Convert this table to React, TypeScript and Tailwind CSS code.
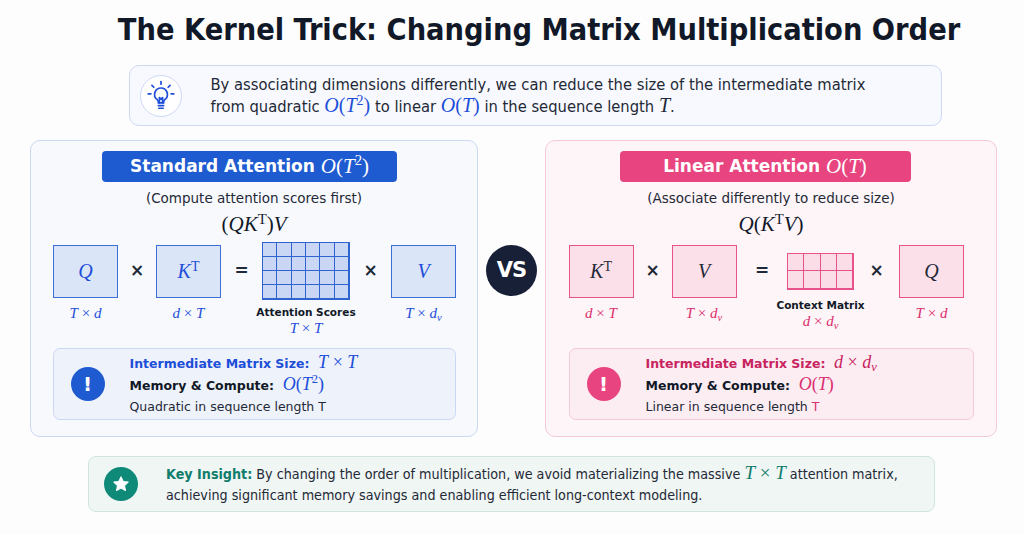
import React from 'react';

const sans = { fontFamily: '"DejaVu Sans", "Noto Sans", sans-serif' };
const cond = { fontFamily: '"DejaVu Sans Condensed", "DejaVu Sans", sans-serif', fontStretch: 'condensed' as const };
const serif = { fontFamily: '"Liberation Serif", "DejaVu Serif", serif' };

function I({ children }: { children: React.ReactNode }) {
  return <span className="italic">{children}</span>;
}

function Sup({ children }: { children: React.ReactNode }) {
  return <sup className="text-[0.7em] not-italic">{children}</sup>;
}

function Sub({ children }: { children: React.ReactNode }) {
  return <sub className="text-[0.7em] italic">{children}</sub>;
}

function Math({ children, className = '' }: { children: React.ReactNode; className?: string }) {
  return (
    <span style={serif} className={`whitespace-nowrap ${className}`}>
      {children}
    </span>
  );
}

function Bulb() {
  return (
    <svg width="28" height="32" viewBox="0 0 26 30" fill="none" stroke="#1d4ed8" strokeWidth="1.6" strokeLinecap="round" strokeLinejoin="round">
      <line x1="13" y1="1.5" x2="13" y2="4" />
      <line x1="4.5" y1="5" x2="6.3" y2="6.8" />
      <line x1="21.5" y1="5" x2="19.7" y2="6.8" />
      <line x1="1" y1="13" x2="3.5" y2="13" />
      <line x1="22.5" y1="13" x2="25" y2="13" />
      <path d="M13 7.5a6 6 0 0 0-3.6 10.8c.8.7 1.1 1.5 1.1 2.4v.8h5v-.8c0-.9.3-1.7 1.1-2.4A6 6 0 0 0 13 7.5z" />
      <path d="M11.5 21.5v-5l1.5 1.5 1.5-1.5v5" />
      <line x1="10.5" y1="24" x2="15.5" y2="24" />
      <line x1="11" y1="26.5" x2="15" y2="26.5" />
    </svg>
  );
}

function Box({ color, children }: { color: 'blue' | 'pink'; children: React.ReactNode }) {
  const cls =
    color === 'blue'
      ? 'border-[#3b6fd6] bg-[#dbe5f8] text-[#1d4ed8]'
      : 'border-[#e8528a] bg-[#fbe0ea] text-[#1f2937]';
  return (
    <div className={`w-[65px] h-[53px] border flex items-center justify-center text-[20px] ${cls}`}>
      <Math>{children}</Math>
    </div>
  );
}

function Grid({ cols, rows, w, h, color }: { cols: number; rows: number; w: number; h: number; color: 'blue' | 'pink' }) {
  const cells = Array.from({ length: cols * rows });
  const border = color === 'blue' ? '#2f63d0' : '#e8528a';
  const bg = color === 'blue' ? '#c9d7f5' : '#fbdde8';
  return (
    <div
      className="grid border"
      style={{
        width: w,
        height: h,
        gridTemplateColumns: `repeat(${cols}, 1fr)`,
        gridTemplateRows: `repeat(${rows}, 1fr)`,
        borderColor: border,
        background: bg,
      }}
    >
      {cells.map((_, i) => (
        <div key={i} style={{ borderRight: `1px solid ${border}`, borderBottom: `1px solid ${border}` }} />
      ))}
    </div>
  );
}

function Op({ w, children }: { w: number; children: React.ReactNode }) {
  return (
    <div style={{ width: w, ...sans }} className="h-[58px] flex items-center justify-center text-[17px] font-bold text-[#1f2937]">
      {children}
    </div>
  );
}

function Label({ color, children }: { color: string; children: React.ReactNode }) {
  return <div className={`text-[15px] leading-[16px] ${color}`}><Math>{children}</Math></div>;
}

function Col({ w, children }: { w: number; children: React.ReactNode }) {
  return (
    <div style={{ width: w }} className="flex flex-col items-center">
      {children}
    </div>
  );
}

function Alert({ color }: { color: string }) {
  return (
    <div className={`w-[34px] h-[34px] rounded-full flex items-center justify-center text-white text-[20px] font-bold ${color}`} style={sans}>
      !
    </div>
  );
}

export default function App() {
  return (
    <div className="w-[1024px] h-[534px] bg-[#fdfdfe] overflow-hidden flex flex-col items-center text-[#1f2937]">
      <h1 style={cond} className="mt-[11px] ml-[54px] text-[30.4px] leading-[38px] font-bold text-[#111827]">
        The Kernel Trick: Changing Matrix Multiplication Order
      </h1>

      <div className="mt-[16px] ml-[46px] w-[813px] h-[61px] rounded-[10px] border border-[#cdd9f3] bg-[#f7f9fe] flex items-center pl-[10px]">
        <div className="w-[42px] h-[42px] rounded-full border border-[#cdd9f3] bg-white flex items-center justify-center">
          <Bulb />
        </div>
        <div style={cond} className="ml-[29px] text-[16.4px] leading-[21px] text-[#1f2937]">
          <div>By associating dimensions differently, we can reduce the size of the intermediate matrix</div>
          <div>
            from quadratic <Math className="text-[20px] text-[#1d4ed8]"><I>O</I>(<I>T</I><Sup>2</Sup>)</Math> to linear{' '}
            <Math className="text-[20px] text-[#1d4ed8]"><I>O</I>(<I>T</I>)</Math> in the sequence length{' '}
            <Math className="text-[20px]"><I>T</I></Math>.
          </div>
        </div>
      </div>

      <div className="mt-[14px] w-full flex items-start pl-[30px]">
        {/* left panel */}
        <div className="w-[448px] h-[297px] rounded-[10px] border border-[#cbd8f4] bg-[#f7f9fd] flex flex-col items-center">
          <div style={sans} className="mt-[10px] -ml-[9px] w-[295px] h-[31px] rounded-[4px] bg-[#1f5bd0] text-white flex items-center justify-center text-[17px] font-bold">
            Standard Attention&nbsp;<Math className="text-[21px] font-normal"><I>O</I>(<I>T</I><Sup>2</Sup>)</Math>
          </div>
          <div style={sans} className="mt-[7px] text-[13.5px] leading-[18px] text-[#1f2937]">(Compute attention scores first)</div>
          <div className="mt-[4px] text-[21px] leading-[24px] text-[#111827]">
            <Math>(<I>Q</I><I>K</I><Sup>T</Sup>)<I>V</I></Math>
          </div>
          <div className="mt-[6px] h-[92px] w-full pl-[22px] flex items-start">
            <Col w={65}>
              <div className="h-[58px] flex items-center"><Box color="blue"><I>Q</I></Box></div>
              <Label color="text-[#1d4ed8] mt-[4px]"><I>T</I> × <I>d</I></Label>
            </Col>
            <Op w={38}>×</Op>
            <Col w={65}>
              <div className="h-[58px] flex items-center"><Box color="blue"><I>K</I><Sup>T</Sup></Box></div>
              <Label color="text-[#1d4ed8] mt-[4px]"><I>d</I> × <I>T</I></Label>
            </Col>
            <Op w={41}>=</Op>
            <Col w={88}>
              <Grid cols={6} rows={4} w={88} h={58} color="blue" />
              <div style={sans} className="mt-[6px] whitespace-nowrap text-[10.5px] leading-[13px] font-bold text-[#111827]">Attention Scores</div>
              <Label color="text-[#1d4ed8]"><I>T</I> × <I>T</I></Label>
            </Col>
            <Op w={41}>×</Op>
            <Col w={65}>
              <div className="h-[58px] flex items-center"><Box color="blue"><I>V</I></Box></div>
              <Label color="text-[#1d4ed8] mt-[4px]"><I>T</I> × <I>d</I><Sub>v</Sub></Label>
            </Col>
          </div>
          <div className="mt-[14px] w-[403px] h-[72px] rounded-[7px] border border-[#cbd8f4] bg-[#eef2fa] flex items-center pl-[17px]">
            <Alert color="bg-[#1f5bd0]" />
            <div style={sans} className="ml-[25px] text-[12.5px] leading-[21px]">
              <div className="font-bold text-[#1d4ed8] flex items-baseline">
                Intermediate Matrix Size:&nbsp;&nbsp;<Math className="text-[18px] font-normal"><I>T</I> × <I>T</I></Math>
              </div>
              <div className="font-bold text-[#111827] flex items-baseline">
                Memory &amp; Compute:&nbsp;&nbsp;<Math className="text-[18px] font-normal text-[#1d4ed8]"><I>O</I>(<I>T</I><Sup>2</Sup>)</Math>
              </div>
              <div className="text-[#1f2937]">Quadratic in sequence length T</div>
            </div>
          </div>
        </div>

        {/* VS */}
        <div className="w-[67px] pt-[105px] flex justify-center">
          <div style={sans} className="w-[51px] h-[51px] rounded-full bg-[#172036] text-white flex items-center justify-center text-[21px] font-bold tracking-[-1px]">
            VS
          </div>
        </div>

        {/* right panel */}
        <div className="w-[452px] h-[297px] rounded-[10px] border border-[#f6c9d8] bg-[#fdf5f8] flex flex-col items-center">
          <div style={sans} className="mt-[10px] -ml-[12px] w-[291px] h-[31px] rounded-[4px] bg-[#e8447f] text-white flex items-center justify-center text-[17px] font-bold">
            Linear Attention&nbsp;<Math className="text-[21px] font-normal"><I>O</I>(<I>T</I>)</Math>
          </div>
          <div style={sans} className="mt-[7px] text-[13.5px] leading-[18px] text-[#1f2937]">(Associate differently to reduce size)</div>
          <div className="mt-[4px] text-[21px] leading-[24px] text-[#111827]">
            <Math><I>Q</I>(<I>K</I><Sup>T</Sup><I>V</I>)</Math>
          </div>
          <div className="mt-[6px] h-[92px] w-full pl-[22px] flex items-start">
            <Col w={66}>
              <div className="h-[58px] flex items-center"><Box color="pink"><I>K</I><Sup>T</Sup></Box></div>
              <Label color="text-[#db2e6e] mt-[4px]"><I>d</I> × <I>T</I></Label>
            </Col>
            <Op w={37}>×</Op>
            <Col w={66}>
              <div className="h-[58px] flex items-center"><Box color="pink"><I>V</I></Box></div>
              <Label color="text-[#db2e6e] mt-[4px]"><I>T</I> × <I>d</I><Sub>v</Sub></Label>
            </Col>
            <Op w={50}>=</Op>
            <Col w={67}>
              <div className="h-[58px] flex items-center"><Grid cols={4} rows={2} w={67} h={37} color="pink" /></div>
              <div style={sans} className="-mt-[1px] whitespace-nowrap text-[10.5px] leading-[13px] font-bold text-[#111827]">Context Matrix</div>
              <Label color="text-[#db2e6e]"><I>d</I> × <I>d</I><Sub>v</Sub></Label>
            </Col>
            <Op w={45}>×</Op>
            <Col w={65}>
              <div className="h-[58px] flex items-center"><Box color="pink"><I>Q</I></Box></div>
              <Label color="text-[#db2e6e] mt-[4px]"><I>T</I> × <I>d</I></Label>
            </Col>
          </div>
          <div className="mt-[14px] w-[405px] h-[72px] rounded-[7px] border border-[#f6c9d8] bg-[#fcedf3] flex items-center pl-[17px]">
            <Alert color="bg-[#e8447f]" />
            <div style={sans} className="ml-[25px] text-[12.5px] leading-[21px]">
              <div className="font-bold text-[#c8245f] flex items-baseline">
                Intermediate Matrix Size:&nbsp;&nbsp;<Math className="text-[18px] font-normal"><I>d</I> × <I>d</I><Sub>v</Sub></Math>
              </div>
              <div className="font-bold text-[#111827] flex items-baseline">
                Memory &amp; Compute:&nbsp;&nbsp;<Math className="text-[18px] font-normal text-[#db2e6e]"><I>O</I>(<I>T</I>)</Math>
              </div>
              <div className="text-[#1f2937]">Linear in sequence length <span className="text-[#db2e6e]">T</span></div>
            </div>
          </div>
        </div>
      </div>

      <div className="mt-[19px] -ml-[1px] w-[847px] h-[56px] rounded-[8px] border border-[#cfe6de] bg-[#eff6f3] flex items-center pl-[15px]">
        <div className="w-[34px] h-[34px] rounded-full bg-[#0f8a78] flex items-center justify-center">
          <svg width="18" height="18" viewBox="0 0 24 24" fill="white" stroke="white" strokeWidth="1.5" strokeLinejoin="round">
            <path d="M12 2.5l2.9 6.1 6.6.8-4.9 4.6 1.3 6.6L12 17.3l-5.9 3.3 1.3-6.6-4.9-4.6 6.6-.8z" />
          </svg>
        </div>
        <div style={cond} className="ml-[28px] text-[14.2px] leading-[21px] text-[#1f2937]">
          <div>
            <span className="font-bold text-[#0f7d6c]">Key Insight:</span> By changing the order of multiplication, we avoid materializing the massive{' '}
            <Math className="text-[19px] text-[#0f7d6c]"><I>T</I> × <I>T</I></Math> attention matrix,
          </div>
          <div>achieving significant memory savings and enabling efficient long-context modeling.</div>
        </div>
      </div>
    </div>
  );
}
